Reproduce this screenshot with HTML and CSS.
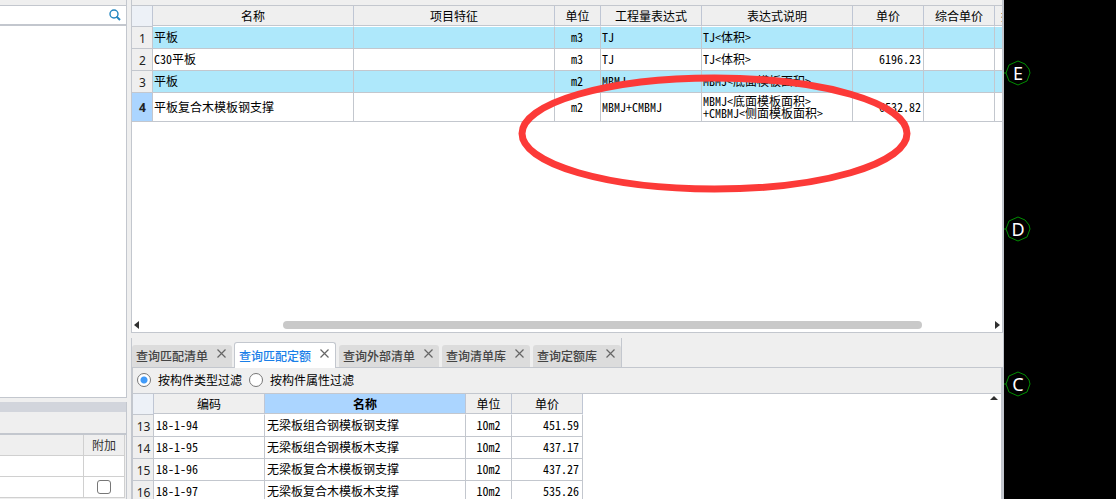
FILE: index.html
```html
<!DOCTYPE html>
<html lang="zh-CN">
<head>
<meta charset="utf-8">
<title>构件做法</title>
<link rel="stylesheet" href="styles.css">
</head>
<body>
<div class="app">
  <aside class="side">
    <section class="side-list">
      <div class="strip"></div>
      <div class="search">
        <input class="search-input" type="text" aria-label="搜索">
        <button class="search-button" type="button" aria-label="搜索">
          <svg width="12" height="12" viewBox="0 0 12 12"><circle cx="5" cy="5" r="4" fill="none" stroke="#2386c0" stroke-width="1.4"/><path d="M7.5 7.5L11 11" stroke="#2386c0" stroke-width="2"/></svg>
        </button>
      </div>
    </section>
    <section class="side-props">
      <div class="props-title"></div>
      <div class="props-tools"></div>
      <table class="props">
        <colgroup><col><col class="w-extra"></colgroup>
        <thead><tr><th></th><th>附加</th></tr></thead>
        <tbody>
          <tr><td></td><td></td></tr>
          <tr><td></td><td><input class="check" type="checkbox" aria-label="附加"></td></tr>
        </tbody>
      </table>
    </section>
  </aside>

  <main class="main">
    <section class="works">
      <div class="strip"></div>
      <div class="works-body">
        <table class="grid works-grid">
          <colgroup><col class="w-num"><col class="w-name"><col class="w-name"><col class="w-unit"><col class="w-expr"><col class="w-desc"><col class="w-price"><col class="w-price"><col class="w-price"></colgroup>
          <thead>
            <tr><th class="corner"></th><th>名称</th><th>项目特征</th><th>单位</th><th>工程量表达式</th><th>表达式说明</th><th>单价</th><th>综合单价</th><th class="cut">措</th></tr>
          </thead>
          <tbody>
            <tr class="item"><th scope="row">1</th><td>平板</td><td></td><td class="mid">m3</td><td>TJ</td><td>TJ&lt;体积&gt;</td><td></td><td></td><td></td></tr>
            <tr><th scope="row">2</th><td>C30平板</td><td></td><td class="mid">m3</td><td>TJ</td><td>TJ&lt;体积&gt;</td><td class="num">6196.23</td><td></td><td></td></tr>
            <tr class="item"><th scope="row">3</th><td>平板</td><td></td><td class="mid">m2</td><td>MBMJ</td><td>MBMJ&lt;底面模板面积&gt;</td><td></td><td></td><td></td></tr>
            <tr class="current"><th scope="row">4</th><td>平板复合木模板钢支撑</td><td></td><td class="mid">m2</td><td>MBMJ+CMBMJ</td><td>MBMJ&lt;底面模板面积&gt;<br>+CMBMJ&lt;侧面模板面积&gt;</td><td class="num">6532.82</td><td></td><td></td></tr>
          </tbody>
        </table>
      </div>
      <div class="hscroll">
        <svg width="5" height="8" viewBox="0 0 5 8"><path d="M5 0V8L0 4Z" fill="#303030"/></svg>
        <div class="track"><div class="thumb"></div></div>
        <svg width="5" height="8" viewBox="0 0 5 8"><path d="M0 0V8L5 4Z" fill="#303030"/></svg>
      </div>
    </section>

    <section class="query">
      <div class="tabs">
        <div class="tab-group">
          <div class="tab"><button class="tab-name" type="button">查询匹配清单</button><button class="close" type="button" aria-label="关闭"><svg width="9" height="9" viewBox="0 0 9 9"><path d="M.5.5L8.500 8.500M8.500.5L.5 8.500"/></svg></button></div>
          <div class="tab active"><button class="tab-name" type="button">查询匹配定额</button><button class="close" type="button" aria-label="关闭"><svg width="9" height="9" viewBox="0 0 9 9"><path d="M.5.5L8.500 8.500M8.500.5L.5 8.500"/></svg></button></div>
          <div class="tab"><button class="tab-name" type="button">查询外部清单</button><button class="close" type="button" aria-label="关闭"><svg width="9" height="9" viewBox="0 0 9 9"><path d="M.5.5L8.500 8.500M8.500.5L.5 8.500"/></svg></button></div>
          <div class="tab"><button class="tab-name" type="button">查询清单库</button><button class="close" type="button" aria-label="关闭"><svg width="9" height="9" viewBox="0 0 9 9"><path d="M.5.5L8.500 8.500M8.500.5L.5 8.500"/></svg></button></div>
          <div class="tab"><button class="tab-name" type="button">查询定额库</button><button class="close" type="button" aria-label="关闭"><svg width="9" height="9" viewBox="0 0 9 9"><path d="M.5.5L8.500 8.500M8.500.5L.5 8.500"/></svg></button></div>
        </div>
      </div>
      <div class="query-body">
        <div class="filters">
          <label class="filter"><input class="radio" type="radio" name="filter" checked>按构件类型过滤</label>
          <label class="filter"><input class="radio" type="radio" name="filter">按构件属性过滤</label>
        </div>
        <div class="results">
          <table class="grid">
            <colgroup><col class="w-num"><col class="w-code"><col class="w-name"><col class="w-unit"><col class="w-price"></colgroup>
            <thead><tr><th class="corner"></th><th>编码</th><th class="sorted">名称</th><th>单位</th><th>单价</th></tr></thead>
            <tbody>
              <tr><th scope="row">13</th><td>18-1-94</td><td>无梁板组合钢模板钢支撑</td><td class="mid">10m2</td><td class="num">451.59</td></tr>
              <tr><th scope="row">14</th><td>18-1-95</td><td>无梁板组合钢模板木支撑</td><td class="mid">10m2</td><td class="num">437.17</td></tr>
              <tr><th scope="row">15</th><td>18-1-96</td><td>无梁板复合木模板钢支撑</td><td class="mid">10m2</td><td class="num">437.27</td></tr>
              <tr><th scope="row">16</th><td>18-1-97</td><td>无梁板复合木模板木支撑</td><td class="mid">10m2</td><td class="num">535.26</td></tr>
            </tbody>
          </table>
          <svg class="up" width="8" height="4" viewBox="0 0 8 4"><path d="M0 4H8L4 0Z" fill="#303030"/></svg>
        </div>
      </div>
    </section>
  </main>

  <div class="canvas">
    <svg class="axis axis-e" width="27" height="26" viewBox="0 0 27 26"><path class="ring" d="M0 13H2M14 1L21 4L25 9L26 13L23 21L14 25L5 21L2 13L5 5Z"/><text x="14" y="20">E</text></svg>
    <svg class="axis axis-d" width="27" height="26" viewBox="0 0 27 26"><path class="ring" d="M0 13H2M14 1L21 4L25 9L26 13L23 21L14 25L5 21L2 13L5 5Z"/><text x="14" y="20">D</text></svg>
    <svg class="axis axis-c" width="27" height="26" viewBox="0 0 27 26"><path class="ring" d="M0 13H2M14 1L21 4L25 9L26 13L23 21L14 25L5 21L2 13L5 5Z"/><text x="14" y="20">C</text></svg>
  </div>

  <svg class="markup" width="394" height="120" viewBox="0 0 394 120"><ellipse cx="196.500" cy="59.500" rx="192.500" ry="55.500" fill="none" stroke="#fc3a38" stroke-width="7"/></svg>
</div>
</body>
</html>
```
FILE: styles.css
```css
* { box-sizing: border-box; }

body {
  margin: 0;
  background: #efefef;
  color: #000;
  font: 12px/16px "Noto Sans CJK SC", sans-serif;
}

button, input {
  margin: 0;
  padding: 0;
  border: 0;
  background: none;
  font: inherit;
  color: inherit;
}

svg { display: block; flex: none; }

table {
  border-collapse: separate;
  border-spacing: 0;
  table-layout: fixed;
}

th, td { padding: 0; font-weight: 400; }

.app {
  position: relative;
  display: grid;
  grid-template-columns: 127px 1fr 112px;
  height: 100vh;
  overflow: hidden;
}

.strip {
  flex: none;
  height: 6px;
  background: #efefef;
  border-bottom: 1px solid #c3c7ce;
}

/* Left side */
.side { display: flex; flex-direction: column; gap: 4px; min-height: 0; }

.side-list {
  flex: 1;
  background: #fff;
  border: solid #c3c7ce;
  border-width: 0 1px 1px 0;
}

.search {
  display: flex;
  align-items: center;
  height: 20px;
  padding-right: 5px;
  border-bottom: 2px solid #c3c7ce;
}

.search-input { flex: 1; min-width: 0; height: 18px; }

.side-props { padding-bottom: 1px; border-right: 1px solid #c3c7ce; }
.props-title { height: 10px; background: #d2d5dc; }
.props-tools { height: 23px; border-bottom: 2px solid #c3c7ce; }

.props { width: 125px; background: #fff; }
.props th { height: 21px; background: #efefef; color: #333; }
.props td { height: 21px; padding-bottom: 1px; text-align: center; }
.props th, .props td { border: solid #d0d0d0; border-width: 0 1px 1px 0; }
.w-extra { width: 41px; }

.check {
  display: block;
  appearance: none;
  width: 14px;
  height: 14px;
  margin: 0 auto;
  background: #fff;
  border: 1px solid #777;
  border-radius: 3px;
}

/* Centre */
.main {
  display: grid;
  grid-template-rows: 2fr 1fr;
  min-width: 0;
  min-height: 0;
  margin-left: 4px;
}

.works {
  display: flex;
  flex-direction: column;
  min-width: 0;
  min-height: 0;
  background: #fff;
  border: solid #c3c7ce;
  border-width: 0 2px 1px 1px;
}

.works-body { flex: 1; min-height: 0; overflow: hidden; }
.works-grid { width: 934px; }

.grid thead th {
  height: 21px;
  background: #efefef;
  border-right: 1px solid #bfc6d4;
  border-bottom: 1px solid #fff;
  box-shadow: inset 0 -1px #c3c7ce;
}

.grid thead .corner {
  background: #edf1f7;
  border-bottom-color: #c3c7ce;
  box-shadow: none;
}

.grid thead .sorted { background: #abd5ff; font-weight: 700; }
.grid thead .cut { padding-left: 6px; text-align: left; }

.grid tbody th {
  height: 22px;
  padding: 3px 0 0 1px;
  background: #efefef;
  border: solid #c3c7ce;
  border-width: 0 1px 1px 0;
  color: #222;
  font: 12px/16px "Noto Sans", sans-serif;
}

.grid td {
  padding: 0 2px;
  background: #fff;
  border: solid #c3c7ce;
  border-width: 0 1px 1px 0;
  font-feature-settings: "hwid";
  line-height: 12px;
  white-space: nowrap;
}

.grid .mid { text-align: center; }
.grid .num { text-align: right; }
.grid .item td { background: #aee8fb; }
.grid .current th { height: 29px; padding-top: 1px; background: #abd5ff; font-weight: 700; }

.works-grid td { padding: 0 2px 2px 1px; }
.works-grid .current td { padding-bottom: 0; }

.w-num { width: 21px; }
.w-code { width: 111px; }
.w-name { width: 201px; }
.w-unit { width: 46px; }
.w-expr { width: 101px; }
.w-desc { width: 151px; }
.w-price { width: 71px; }

.hscroll {
  display: flex;
  align-items: center;
  height: 14px;
  padding: 0 2px;
}

.track { flex: 1; padding: 0 73px 0 144px; }
.thumb { height: 8px; border-radius: 4px; background: #c9c9c9; }

/* Query pane */
.query { display: flex; flex-direction: column; min-width: 0; min-height: 0; }

.tabs {
  flex: none;
  display: flex;
  height: 35px;
  padding-top: 5px;
  border-right: 1px solid #c3c7ce;
  border-bottom: 1px solid #c3c7ce;
}

.tab-group {
  display: flex;
  align-items: flex-end;
  gap: 3px;
  border: solid #c3c7ce;
  border-width: 0 1px;
}

.tab {
  display: flex;
  gap: 9px;
  height: 22px;
  padding: 3px 6px 0 4px;
  background: #dcdcdc;
  border-radius: 3px 3px 0 0;
  color: #444;
}

.tab.active {
  height: 26px;
  margin: 0 0 -1px -1px;
  padding-top: 5px;
  background: #fff;
  border: 1px solid #c3c7ce;
  border-bottom: 0;
  color: #1a7fe8;
}

.tab-name { height: 16px; font-weight: 500; }
.close { align-self: flex-start; height: 10px; padding-top: 1px; }
.close path { fill: none; stroke: #666; stroke-width: 1.2; }

.query-body {
  flex: 1;
  display: flex;
  flex-direction: column;
  min-height: 0;
  border: solid #c3c7ce;
  border-width: 0 3px 0 2px;
}

.filters {
  flex: none;
  display: flex;
  align-items: center;
  gap: 7px;
  height: 26px;
  padding-left: 4px;
  border-bottom: 1px solid #c3c7ce;
}

.filter { display: flex; align-items: center; gap: 7px; }

.radio {
  appearance: none;
  width: 14px;
  height: 14px;
  background: #fff;
  border: 1px solid #777;
  border-radius: 50%;
}

.radio:checked { background: radial-gradient(circle, #419bf9 3px, #fff 4px); }

.results {
  flex: 1;
  display: flex;
  justify-content: space-between;
  align-items: flex-start;
  min-height: 0;
  padding-right: 3px;
  overflow: hidden;
  background: #fff;
}

.results .grid { width: 450px; }
.results .num { padding-right: 3px; }
.up { margin-top: 2px; }

/* Drawing area */
.canvas { position: relative; background: #000; }
.axis { position: absolute; left: 0; }
.axis-e { top: 60px; }
.axis-d { top: 216px; }
.axis-c { top: 371px; }
.ring { fill: none; stroke: #008c00; }

.axis text {
  fill: #fff;
  font: 18px "Noto Sans", sans-serif;
  text-anchor: middle;
}

.markup { position: absolute; left: 518px; top: 74px; pointer-events: none; }
```
